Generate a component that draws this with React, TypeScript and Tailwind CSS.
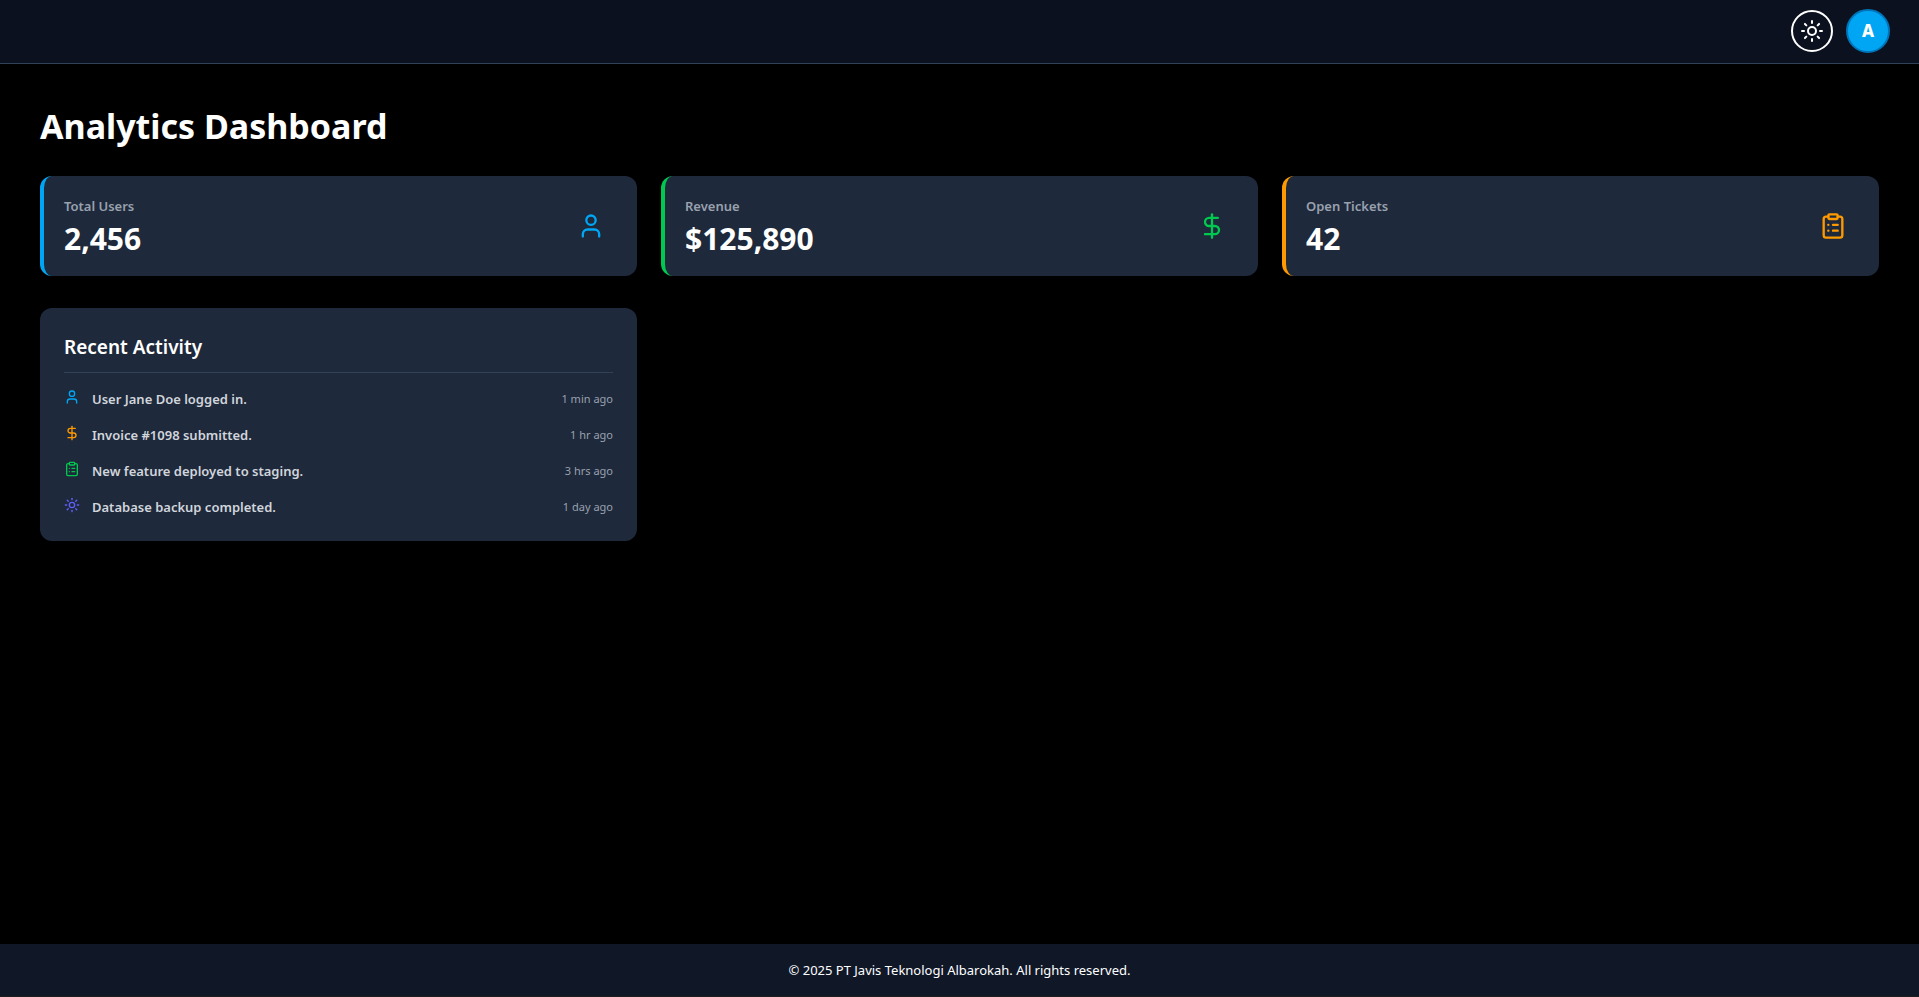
import React from "react";
import { User, DollarSign, ClipboardList, Sun } from "lucide-react";

const stats = [
  { label: "Total Users", value: "2,456", Icon: User, border: "border-[#00a6f4]", color: "text-[#00a6f4]" },
  { label: "Revenue", value: "$125,890", Icon: DollarSign, border: "border-[#00c950]", color: "text-[#00c950]" },
  { label: "Open Tickets", value: "42", Icon: ClipboardList, border: "border-[#fe9a00]", color: "text-[#fe9a00]" },
];

const activities = [
  { text: "User Jane Doe logged in.", time: "1 min ago", Icon: User, color: "text-[#00a6f4]" },
  { text: "Invoice #1098 submitted.", time: "1 hr ago", Icon: DollarSign, color: "text-[#fe9a00]" },
  { text: "New feature deployed to staging.", time: "3 hrs ago", Icon: ClipboardList, color: "text-[#00c950]" },
  { text: "Database backup completed.", time: "1 day ago", Icon: Sun, color: "text-[#615fff]" },
];

export default function App() {
  return (
    <div className="flex min-h-screen flex-col bg-black font-['Noto_Sans',sans-serif] text-white">
      <header className="flex h-16 items-center justify-end gap-[13px] border-b border-[#314158] bg-[#0b111f] px-[29px] pb-px">
        <button type="button" aria-label="Toggle theme" className="flex size-[42px] items-center justify-center rounded-full border-2 border-white">
          <Sun className="size-6" />
        </button>
        <button type="button" className="flex size-11 items-center justify-center rounded-full border-2 border-[#0074b8] bg-[#00a6f4] text-[17px] font-extrabold">A</button>
      </header>
      <main className="flex-1 p-10">
        <h1 className="mb-7 text-[34px] leading-11 font-bold">Analytics Dashboard</h1>
        <section className="mb-8 grid grid-cols-3 gap-6">
          {stats.map(({ label, value, Icon, border, color }) => (
            <div key={label} className={`flex items-center justify-between rounded-xl border-l-4 bg-[#1e293b] p-5 ${border}`}>
              <div>
                <p className="text-[13px] leading-5 font-semibold text-gray-400">{label}</p>
                <p className="mt-1.5 text-3xl leading-[34px] font-bold">{value}</p>
              </div>
              <Icon className={`mr-3 size-7 ${color}`} />
            </div>
          ))}
        </section>
        <section className="grid grid-cols-3 gap-6">
          <div className="rounded-xl bg-[#1e293b] p-6">
            <h2 className="mb-4 border-b border-[#314158] pb-2.5 text-[19px] leading-[30px] font-semibold">Recent Activity</h2>
            <ul className="space-y-4">
              {activities.map(({ text, time, Icon, color }) => (
                <li key={text} className="flex items-start">
                  <Icon className={`mr-3 size-4 ${color}`} />
                  <span className="flex-1 text-[13px] leading-5 font-semibold text-gray-300">{text}</span>
                  <time className="text-[11px] leading-5 text-gray-400">{time}</time>
                </li>
              ))}
            </ul>
          </div>
        </section>
      </main>
      <footer className="border-b border-[#1e1e1e] bg-[#101828] py-4 text-center text-[13px] leading-5">© 2025 PT Javis Teknologi Albarokah. All rights reserved.</footer>
    </div>
  );
}
